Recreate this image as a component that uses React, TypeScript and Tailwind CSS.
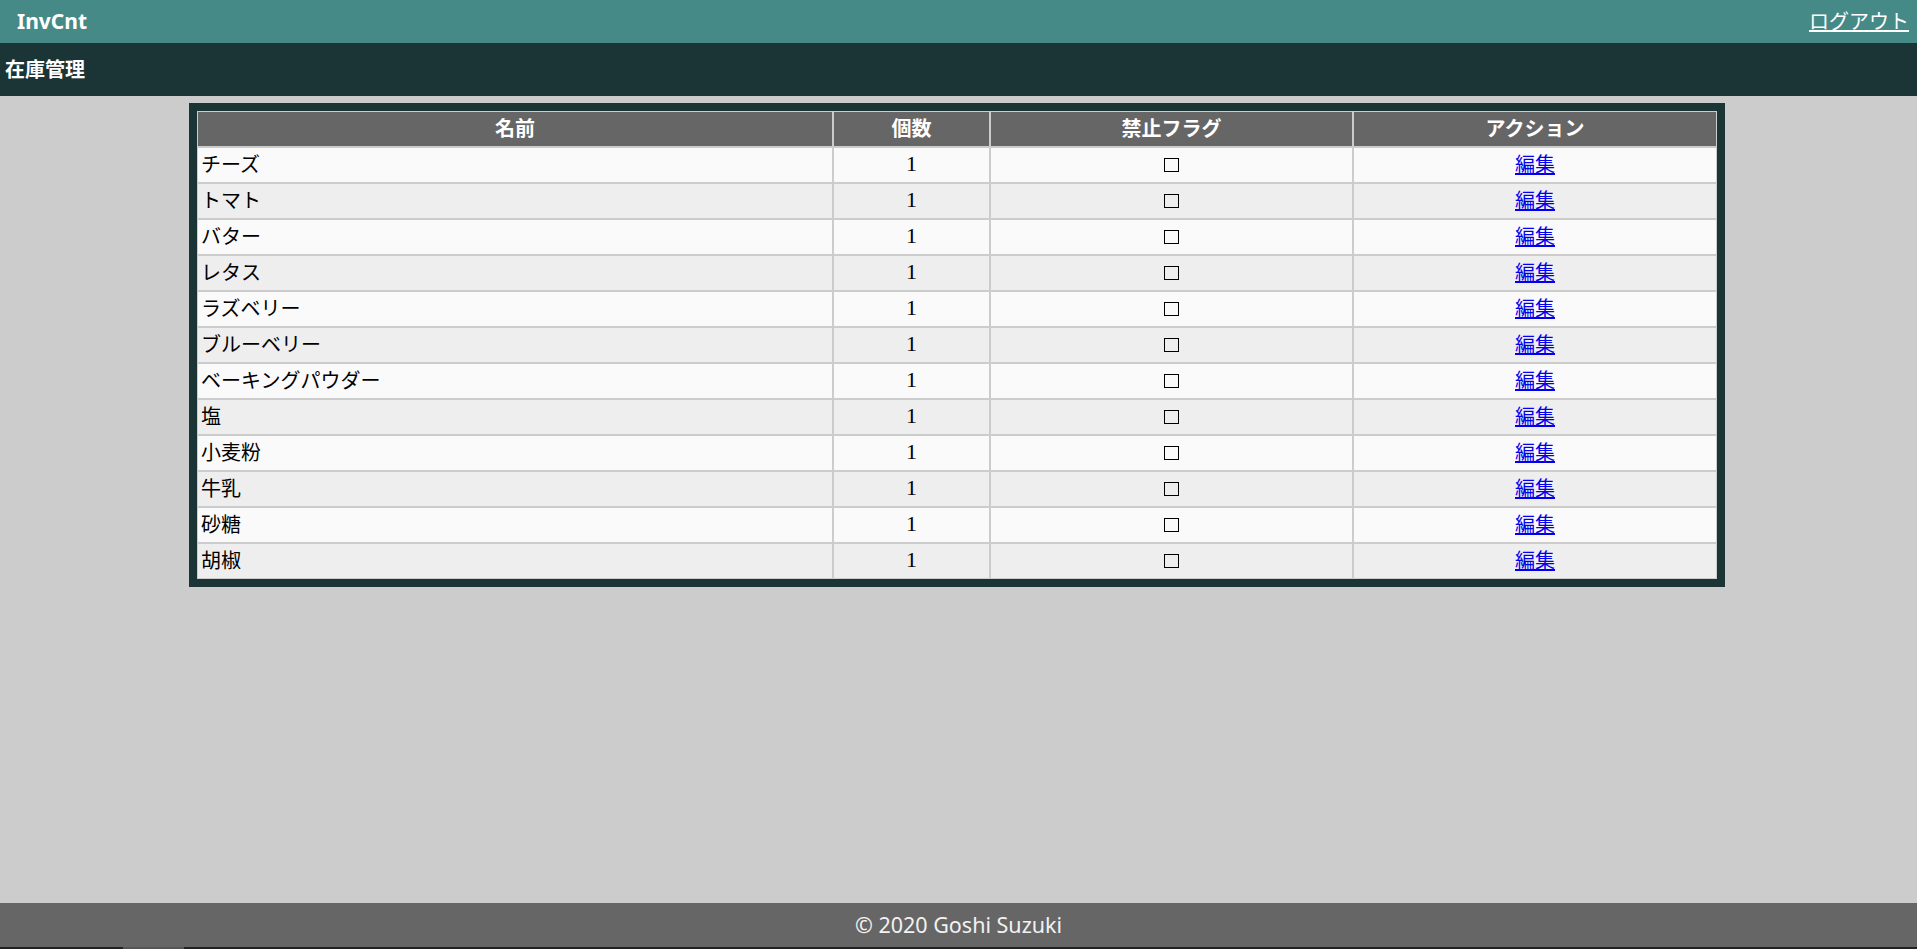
import React from 'react';

const items = [
  'チーズ',
  'トマト',
  'バター',
  'レタス',
  'ラズベリー',
  'ブルーベリー',
  'ベーキングパウダー',
  '塩',
  '小麦粉',
  '牛乳',
  '砂糖',
  '胡椒',
];

const font = "font-['Noto_Sans','Noto_Sans_CJK_JP',sans-serif]";

const App = () => {
  return (
    <div className={`flex flex-col h-[949px] bg-[#cccccc] ${font}`}>
      <header className="flex items-center justify-between h-[43px] pl-[17px] pr-[8px] bg-[#468a88] text-white">
        <span className="text-[21px] font-bold leading-none">InvCnt</span>
        <a href="#!" className="text-[20px] underline leading-none">
          ログアウト
        </a>
      </header>
      <div className="flex items-center h-[53px] pl-[5px] bg-[#1b3435] text-white">
        <h1 className="text-[20px] font-bold">在庫管理</h1>
      </div>
      <main className="grow pt-[7px]">
        <div className="w-[1536px] ml-[189px] p-[8px] bg-[#1b3435]">
          <table className="w-[1520px] table-fixed border-separate border-spacing-0 text-[20px]">
            <thead>
              <tr className="h-[36px] bg-[#666666] text-white">
                <th className="w-[636px] border border-[#cccccc] font-bold">名前</th>
                <th className="w-[157px] border border-[#cccccc] font-bold">個数</th>
                <th className="w-[363px] border border-[#cccccc] font-bold">禁止フラグ</th>
                <th className="w-[364px] border border-[#cccccc] font-bold">アクション</th>
              </tr>
            </thead>
            <tbody>
              {items.map((name, i) => (
                <tr
                  key={name}
                  className={`h-[36px] text-black ${i % 2 === 0 ? 'bg-[#fafafa]' : 'bg-[#eeeeee]'}`}
                >
                  <td className="border border-[#cccccc] pl-[3px]">{name}</td>
                  <td className="border border-[#cccccc] pb-[3px] text-center font-['Liberation_Serif',serif] text-[22px] leading-none">
                    1
                  </td>
                  <td className="border border-[#cccccc] pb-[4px] text-center leading-none">
                    <span className="inline-block w-[15px] h-[14px] border border-black align-middle" />
                  </td>
                  <td className="border border-[#cccccc] text-center">
                    <a href="#!" className="text-[#0000ee] underline">
                      編集
                    </a>
                  </td>
                </tr>
              ))}
            </tbody>
          </table>
        </div>
      </main>
      <footer className="flex items-center justify-center h-[44px] bg-[#666666] text-[#f2f2f2] text-[21.5px]">
        © 2020 Goshi Suzuki
      </footer>
      <div className="flex h-[2px] bg-[#222222]">
        <div className="ml-[123px] w-[61px] bg-[#555555]" />
      </div>
    </div>
  );
};

export default App;
